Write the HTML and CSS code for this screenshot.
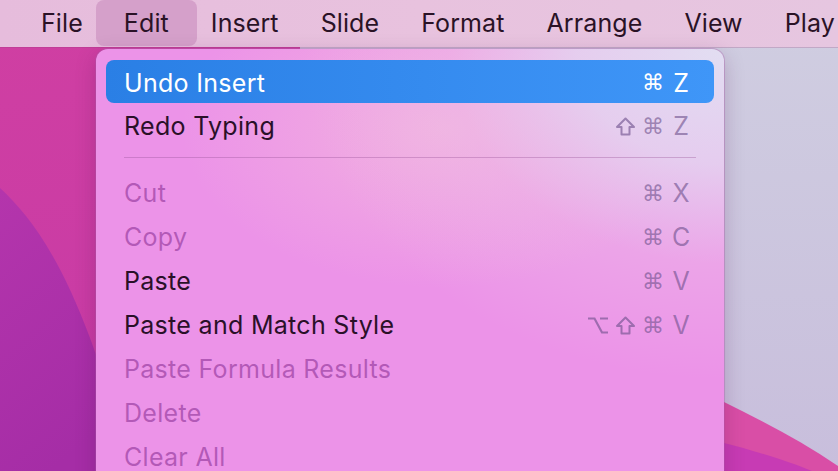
FILE: index.html
```html
<!DOCTYPE html>
<html>
<head>
<meta charset="utf-8">
<link rel="stylesheet" href="styles.css">
</head>
<body>
<div class="screen">
  <svg class="wallpaper" width="838" height="471" viewBox="0 0 838 471" preserveAspectRatio="none">
    <defs>
      <linearGradient id="mag" x1="0" y1="0" x2="0.3" y2="1">
        <stop offset="0" stop-color="#d03fa2"/>
        <stop offset="1" stop-color="#c63aa6"/>
      </linearGradient>
      <linearGradient id="pur" x1="0" y1="0" x2="0.4" y2="1">
        <stop offset="0" stop-color="#b435ac"/>
        <stop offset="1" stop-color="#a52da6"/>
      </linearGradient>
      <linearGradient id="lav" x1="0" y1="0" x2="0" y2="1">
        <stop offset="0" stop-color="#d0cee1"/>
        <stop offset="1" stop-color="#c8bedc"/>
      </linearGradient>
    </defs>
    <rect x="0" y="0" width="838" height="471" fill="url(#mag)"/>
    <path d="M0 188 C40 225 85 290 130 471 L0 471 Z" fill="url(#pur)"/>
    <rect x="300" y="0" width="538" height="471" fill="url(#lav)"/>
    <path d="M720 400 C760 420 800 440 838 466 L838 471 L720 471 Z" fill="#d94ea6"/>
    <path d="M720 442 C760 452 790 462 812 471 L720 471 Z" fill="#c73bb4"/>
  </svg>

  <nav class="menubar">
    <span class="mb-item">File</span>
    <span class="mb-item mb-active">Edit</span>
    <span class="mb-item">Insert</span>
    <span class="mb-item">Slide</span>
    <span class="mb-item">Format</span>
    <span class="mb-item">Arrange</span>
    <span class="mb-item">View</span>
    <span class="mb-item">Play</span>
  </nav>

  <div class="menu">
    <div class="row selected">
      <span class="label">Undo Insert</span>
      <span class="keys"><span class="mod cmd">⌘</span><span class="key">Z</span></span>
    </div>
    <div class="row">
      <span class="label">Redo Typing</span>
      <span class="keys dim">
        <svg class="mod-svg" width="21" height="19" viewBox="0 0 21 19"><path d="M10.5 1.5 L19 10 H14.5 V17.5 H6.5 V10 H2 Z" fill="none" stroke="currentColor" stroke-width="2" stroke-linejoin="round"/></svg>
        <span class="mod cmd">⌘</span><span class="key">Z</span>
      </span>
    </div>
    <div class="sep"></div>
    <div class="row disabled">
      <span class="label">Cut</span>
      <span class="keys dim"><span class="mod cmd">⌘</span><span class="key">X</span></span>
    </div>
    <div class="row disabled">
      <span class="label">Copy</span>
      <span class="keys dim"><span class="mod cmd">⌘</span><span class="key">C</span></span>
    </div>
    <div class="row">
      <span class="label">Paste</span>
      <span class="keys dim"><span class="mod cmd">⌘</span><span class="key">V</span></span>
    </div>
    <div class="row">
      <span class="label">Paste and Match Style</span>
      <span class="keys dim">
        <svg class="mod-svg" width="22" height="19" viewBox="0 0 22 19"><path d="M1 2.5 H7.5 L15 16.5 H21 M13 2.5 H21" fill="none" stroke="currentColor" stroke-width="2.2"/></svg>
        <svg class="mod-svg" width="21" height="19" viewBox="0 0 21 19"><path d="M10.5 1.5 L19 10 H14.5 V17.5 H6.5 V10 H2 Z" fill="none" stroke="currentColor" stroke-width="2" stroke-linejoin="round"/></svg>
        <span class="mod cmd">⌘</span><span class="key">V</span>
      </span>
    </div>
    <div class="row disabled">
      <span class="label">Paste Formula Results</span>
    </div>
    <div class="row disabled">
      <span class="label">Delete</span>
    </div>
    <div class="row disabled">
      <span class="label">Clear All</span>
    </div>
  </div>
</div>
</body>
</html>
```
FILE: styles.css
```css
html, body {
  margin: 0;
  padding: 0;
}
body {
  width: 838px;
  height: 471px;
  overflow: hidden;
  font-family: Inter, "Noto Sans", sans-serif;
}
.screen {
  position: relative;
  width: 838px;
  height: 471px;
  overflow: hidden;
}
.wallpaper {
  position: absolute;
  left: 0;
  top: 0;
}
.menubar {
  position: relative;
  height: 47px;
  display: flex;
  align-items: center;
  padding-left: 20px;
  background: linear-gradient(to right, #e6bcdc, #e8c2de 50%, #e6c6e0);
  box-shadow: 0 1px 0 rgba(150, 60, 120, 0.25);
  font-size: 25px;
  letter-spacing: 0.1px;
  color: #2a1226;
}
.mb-item {
  padding: 0 21px;
  line-height: 47px;
  white-space: nowrap;
}
.mb-active {
  background: #d5a0ca;
  border-radius: 8px;
  padding: 0 28px;
  margin: 0 -7px 0 -8px;
  height: 46px;
  line-height: 46px;
  align-self: flex-start;
}
.menu {
  position: absolute;
  left: 96px;
  top: 49px;
  width: 628px;
  height: 440px;
  border-radius: 12px;
  padding: 11px 10px 0;
  box-sizing: border-box;
  background:
    radial-gradient(ellipse 420px 330px at 100% 0%, rgba(226, 222, 242, 1) 0%, rgba(228, 214, 240, 0.85) 35%, rgba(236, 190, 232, 0.4) 65%, rgba(238, 160, 232, 0) 100%),
    radial-gradient(ellipse 260px 160px at 55% 18%, rgba(244, 190, 220, 0.7), rgba(244, 190, 220, 0) 100%),
    #ec93e8;
  box-shadow: 0 0 0 1px rgba(170, 90, 170, 0.35), 0 6px 20px rgba(80, 20, 80, 0.25);
  font-size: 25px;
  letter-spacing: 0.3px;
}
.row {
  height: 44px;
  box-sizing: border-box;
  display: flex;
  align-items: center;
  justify-content: space-between;
  padding: 2px 24px 0 18px;
  border-radius: 8px;
  color: #2a1028;
}
.row.selected {
  background: linear-gradient(to right, #2a7fe5, #3f96f8);
  color: #ffffff;
  height: 43px;
}
.row.disabled .label {
  color: rgba(140, 50, 150, 0.6);
}
.keys {
  display: flex;
  align-items: center;
  gap: 6px;
  letter-spacing: 0;
}
.keys .key {
  font-family: Inter, "Noto Sans", sans-serif;
  width: 18px;
  text-align: center;
  margin-left: 3px;
}
.keys .cmd {
  font-family: "DejaVu Sans", sans-serif;
  font-size: 22px;
  width: 21px;
  text-align: center;
}
.mod-svg {
  display: block;
}
.keys.dim {
  color: rgba(110, 80, 140, 0.62);
}
.sep {
  height: 1px;
  margin: 10px 18px 12px;
  background: rgba(150, 80, 150, 0.35);
}
```
